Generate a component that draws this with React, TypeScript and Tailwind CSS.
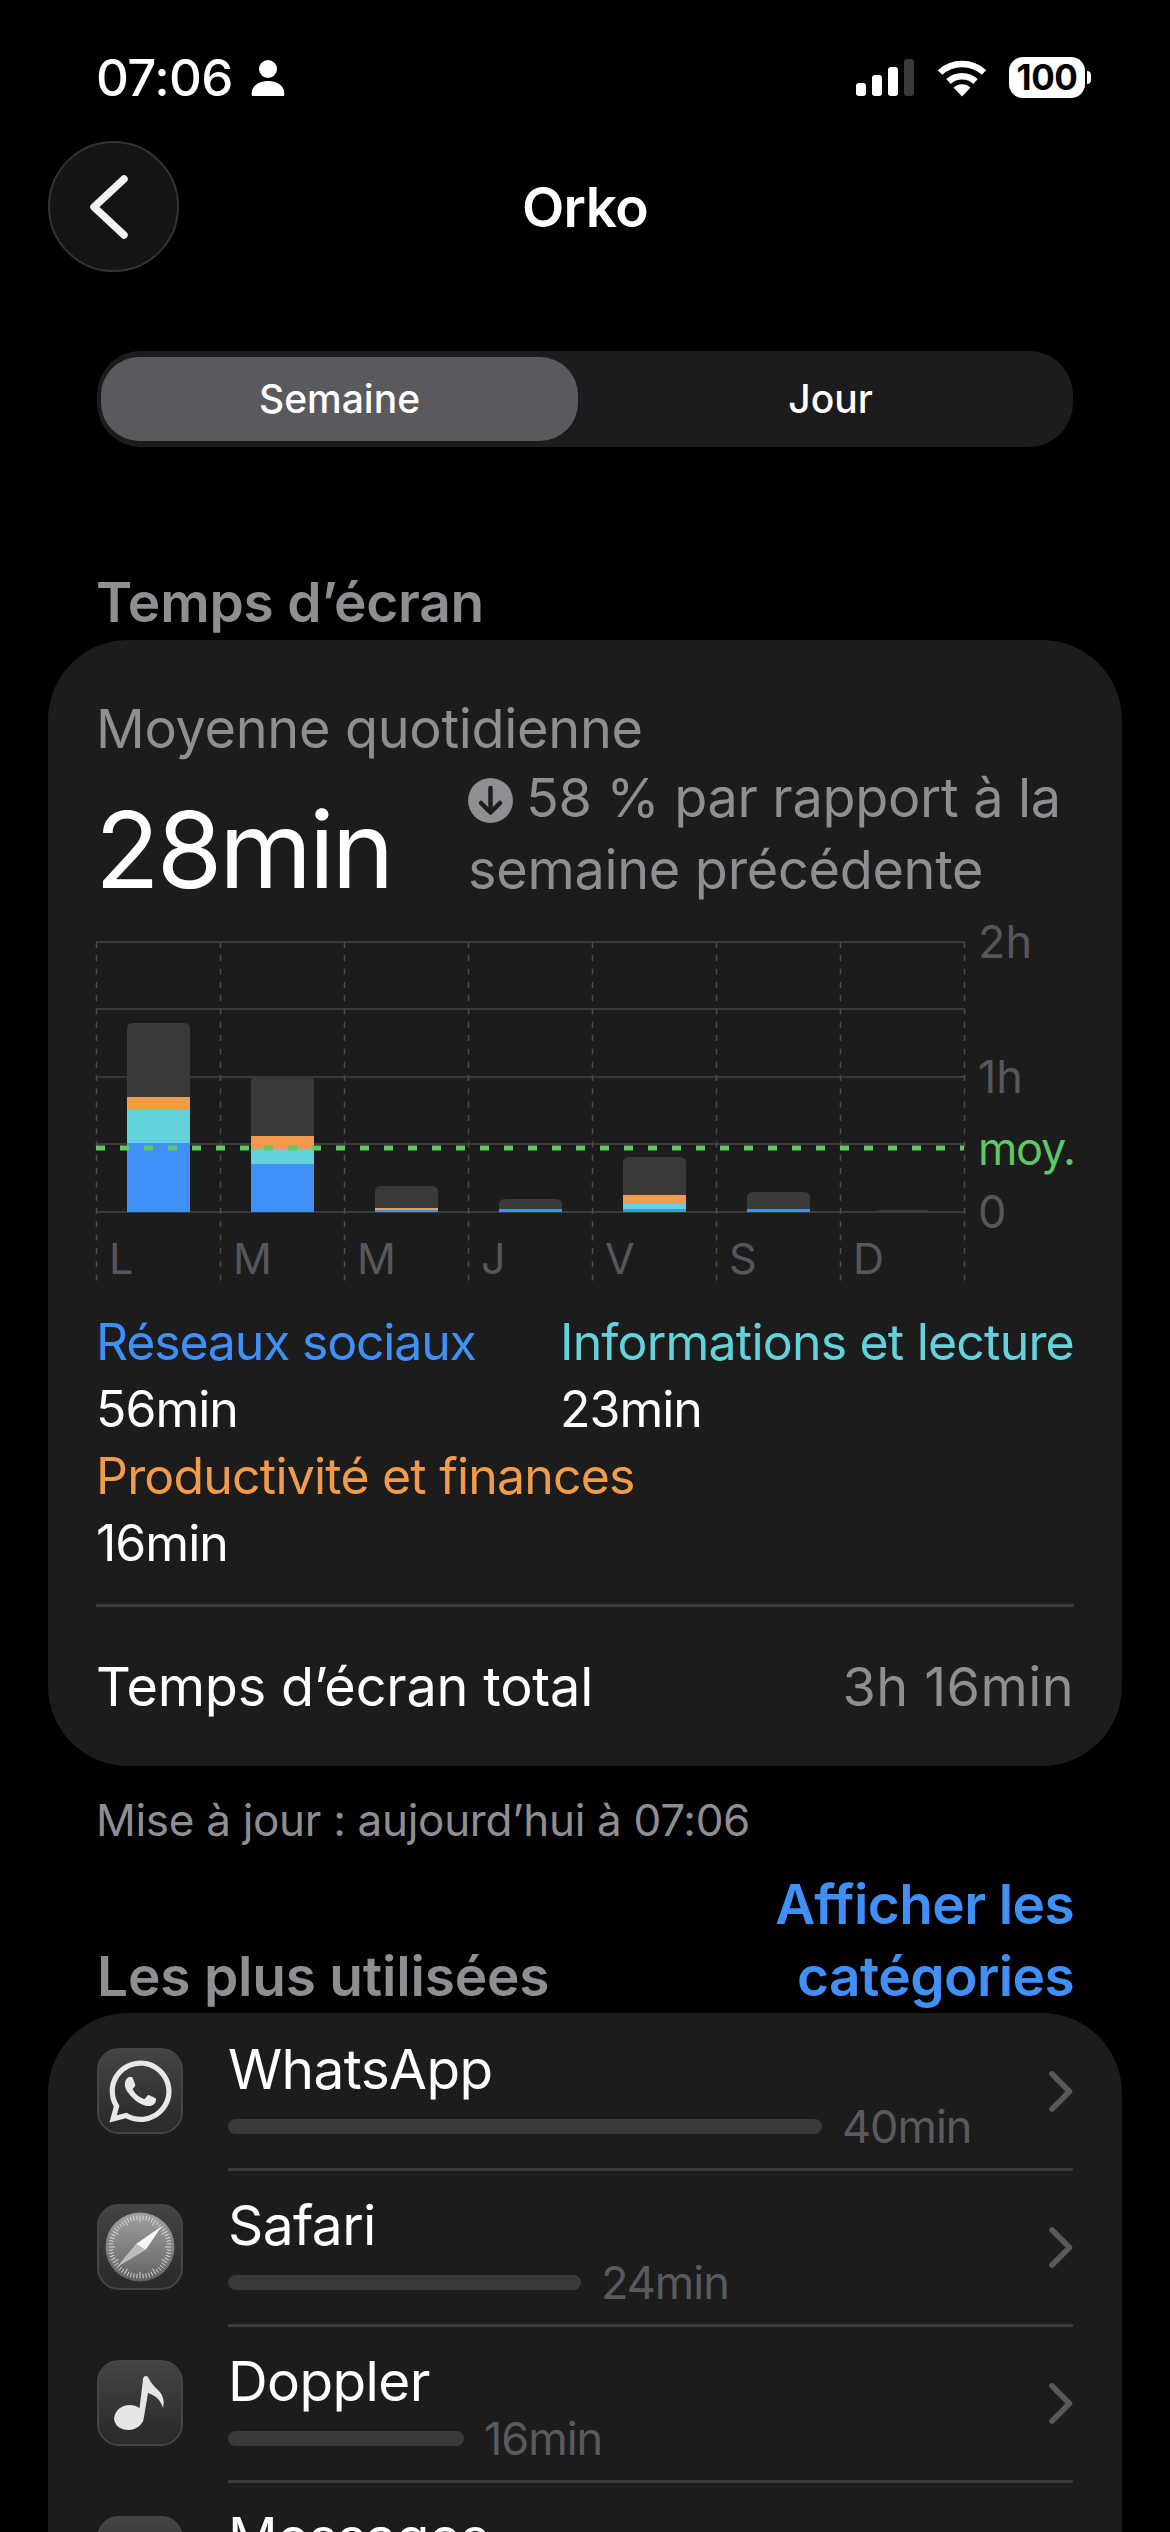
import { FaWhatsapp } from "react-icons/fa";

const days = ["L", "M", "M", "J", "V", "S", "D"];

// chart values are y positions inside the plot: [top, orange, cyan, blue], baseline at 270
const bars = [
  { x: 31, w: 63, top: 81, orange: 155, cyan: 168, blue: 201 },
  { x: 155, w: 63, top: 134, orange: 194, cyan: 207, blue: 222 },
  { x: 279, w: 63, top: 244, orange: 266, cyan: 268, blue: 268 },
  { x: 403, w: 63, top: 257, orange: 267, cyan: 267, blue: 267 },
  { x: 527, w: 63, top: 215, orange: 253, cyan: 262, blue: 267 },
  { x: 651, w: 63, top: 250, orange: 267, cyan: 267, blue: 267 },
  { x: 778, w: 58, top: 268, orange: 270, cyan: 270, blue: 270 },
];

function Wifi() {
  return (
    <svg width="50" height="38" viewBox="0 0 50 38" fill="none">
      <path d="M3 13.5C15 2 35 2 47 13.5" stroke="white" strokeWidth="6.5" />
      <path d="M11.5 22.5C19 15.5 31 15.5 38.5 22.5" stroke="white" strokeWidth="6.5" />
      <path d="M16.5 28.5L25 37.5L33.5 28.5C28.5 24 21.5 24 16.5 28.5Z" fill="white" />
    </svg>
  );
}

function Person() {
  return (
    <svg width="34" height="36" viewBox="0 0 34 36" fill="white">
      <circle cx="17" cy="9" r="9" />
      <path d="M1 36c-2-9 6-15 16-15s18 6 16 15Z" />
    </svg>
  );
}

function Chart() {
  return (
    <div className="relative h-[342px] w-[976px] shrink-0">
      <svg width="868" height="342" viewBox="0 0 868 342" fill="none" className="block overflow-visible">
        {[0, 1, 2, 3, 4, 5, 6, 7].map((i) => (
          <line key={i} x1={i * 124 + 0.5} y1="0" x2={i * 124 + 0.5} y2="342" stroke="#4c4c4e" strokeWidth="1.5" strokeDasharray="6 7.3" />
        ))}
        {[0, 67, 135, 202, 270].map((y) => (
          <line key={y} x1="0" y1={y} x2="868" y2={y} stroke="#444446" strokeWidth="1.5" />
        ))}
        {bars.map((b, i) => (
          <g key={i}>
            <path d={`M${b.x} ${b.orange}V${b.top + 6}q0 -6 6 -6H${b.x + b.w - 6}q6 0 6 6V${b.orange}Z`} fill="#3a3a3a" />
            <rect x={b.x} y={b.orange} width={b.w} height={b.cyan - b.orange} fill="#f29b4b" />
            <rect x={b.x} y={b.cyan} width={b.w} height={b.blue - b.cyan} fill="#62d2dc" />
            <rect x={b.x} y={b.blue} width={b.w} height={270 - b.blue} fill="#4090fa" />
          </g>
        ))}
        <line x1="0" y1="206" x2="868" y2="206" stroke="#5fc765" strokeWidth="5" strokeDasharray="9 15" />
      </svg>
      <div className="absolute left-0 top-[291px] grid w-[868px] grid-cols-7 text-[43px] leading-[50px] text-[#57575b]">
        {days.map((d, i) => (
          <span key={i} className="pl-[13px]">{d}</span>
        ))}
      </div>
      <span className="absolute left-[882px] top-[-25px] text-[45px] leading-[50px] text-[#57575b]">2h</span>
      <span className="absolute left-[882px] top-[110px] text-[45px] leading-[50px] text-[#57575b]">1h</span>
      <span className="absolute left-[882px] top-[182px] text-[45px] leading-[50px] tracking-[-1.3px] text-[#5fc765]">moy.</span>
      <span className="absolute left-[882px] top-[245px] text-[45px] leading-[50px] text-[#57575b]">0</span>
    </div>
  );
}

function LegendItem({ label, value, color }: { label: string; value: string; color: string }) {
  return (
    <div>
      <div className={`text-[50px] leading-[67px] whitespace-nowrap ${color}`}>{label}</div>
      <div className="text-[50px] leading-[67px] tracking-[-1px] text-white">{value}</div>
    </div>
  );
}

function AppTile({ children }: { children?: React.ReactNode }) {
  return (
    <div className="mt-[33px] flex h-[86px] w-[86px] shrink-0 items-center justify-center rounded-[22px] border-2 border-[#454547] bg-gradient-to-b from-[#444444] to-[#292929]">
      {children}
    </div>
  );
}

function SafariIcon() {
  const ticks = Array.from({ length: 60 }, (_, i) => i * 6);
  return (
    <svg width="70" height="70" viewBox="0 0 70 70">
      <defs>
        <linearGradient id="dial" x1="0" y1="0" x2="0" y2="1">
          <stop offset="0" stopColor="#a0a0a0" />
          <stop offset="1" stopColor="#626262" />
        </linearGradient>
      </defs>
      <circle cx="35" cy="35" r="34.5" fill="url(#dial)" />
      {ticks.map((a) => (
        <line key={a} x1="35" y1="3.5" x2="35" y2={a % 30 === 0 ? 10 : 8} stroke="#e8e8e8" strokeWidth="0.8" transform={`rotate(${a} 35 35)`} />
      ))}
      <polygon points="57,14 40.5,38 31,32" fill="#f6f6f6" />
      <polygon points="12,55 40.5,38 31,32" fill="#bdbdbd" />
    </svg>
  );
}

function NoteIcon() {
  return (
    <svg width="52" height="55" viewBox="0 0 52 55" fill="#e6e6e6">
      <ellipse cx="15" cy="41.5" rx="15" ry="12.5" transform="rotate(-10 15 41.5)" />
      <path d="M24.5 41L29 3c.3-2.5 3-4 5-2 3 6 6 9 10 13 4 4 7 9 5 18-2-7-6-12-15-15L30 41Z" />
    </svg>
  );
}

function RowChevron() {
  return (
    <svg width="24" height="41" viewBox="0 0 24 41" fill="none" className="shrink-0">
      <path d="M3 3l17.5 17.5L3 38" stroke="#5a5a5e" strokeWidth="5.5" strokeLinecap="round" strokeLinejoin="round" />
    </svg>
  );
}

function AppRow({ name, width, value, icon, last }: { name: string; width: string; value: string; icon?: React.ReactNode; last?: boolean }) {
  return (
    <div className="flex gap-[45px]">
      <AppTile>{icon}</AppTile>
      <div className={`flex h-[156px] flex-1 items-center border-b-[3px] ${last ? "border-transparent" : "border-[#3a3a3a]"}`}>
        <div className="flex-1 self-start pt-[19px]">
          <div className="text-[55px] leading-[70px] tracking-[-0.6px] text-white">{name}</div>
          <div className="mt-[15px] flex h-[15px] items-center gap-[20px]">
            <div className={`h-[15px] rounded-full bg-[#3a3a3c] ${width}`} />
            <span className="text-[45px] leading-[15px] tracking-[-1px] text-[#5a5a5e]">{value}</span>
          </div>
        </div>
        <RowChevron />
      </div>
    </div>
  );
}

export default function App() {
  return (
    <div className="h-[2532px] w-[1170px] overflow-hidden bg-black font-['Inter',sans-serif] text-white">
      {/* status bar */}
      <div className="flex h-[141px] items-start justify-between pl-[96px] pr-[79px] pt-[54px]">
        <div className="flex items-center gap-[18px]">
          <span className="text-[51px] font-medium leading-[48px] tracking-[-0.6px]">07:06</span>
          <Person />
        </div>
        <div className="flex items-center pt-[3px]">
          <div className="flex items-end gap-[6px]">
            <div className="h-[13px] w-[10px] rounded-[3px] bg-white" />
            <div className="h-[21px] w-[10px] rounded-[3px] bg-white" />
            <div className="h-[29px] w-[10px] rounded-[3px] bg-white" />
            <div className="h-[37px] w-[10px] rounded-[3px] bg-[#3a3a3c]" />
          </div>
          <div className="ml-[23px]"><Wifi /></div>
          <div className="ml-[22px] flex items-center gap-[2px]">
            <div className="flex h-[41px] w-[76px] items-center justify-center rounded-[14px] bg-white text-[35px] font-bold leading-none tracking-[-0.5px] text-black">100</div>
            <div className="h-[13px] w-[4px] rounded-r-full bg-white" />
          </div>
        </div>
      </div>

      {/* header */}
      <div className="relative flex h-[131px] items-center justify-center">
        <button className="absolute left-[48px] top-0 flex h-[131px] w-[131px] items-center justify-center rounded-full border-2 border-[#333335] bg-[#141414]">
          <svg width="44" height="70" viewBox="0 0 44 70" fill="none" className="-ml-[10px]">
            <path d="M37 7L7 35l30 28" stroke="#f2f2f2" strokeWidth="7.5" strokeLinecap="round" strokeLinejoin="round" />
          </svg>
        </button>
        <span className="text-[55px] font-semibold leading-[70px] tracking-[-0.6px]">Orko</span>
      </div>

      {/* segment */}
      <div className="mx-[97px] mt-[79px] flex h-[96px] items-center rounded-[44px] bg-[#1c1c1e] px-[4px]">
        <div className="flex h-[84px] w-[477px] items-center justify-center rounded-[38px] bg-[#5a5a5e] text-[39px] font-medium">Semaine</div>
        <div className="flex-1 pl-[14px] text-center text-[39px] font-medium">Jour</div>
      </div>

      <div className="mt-[119px] pl-[96px] text-[55px] font-semibold leading-[72px] tracking-[-0.2px] text-[#8e8e93]">Temps d’écran</div>

      {/* screen time card */}
      <div className="mx-[48px] mt-[2px] h-[1126px] rounded-[80px] bg-[#1c1c1c] px-[48px] pt-[53px]">
        <div className="text-[54px] leading-[72px] tracking-[-0.3px] text-[#8e8e93]">Moyenne quotidienne</div>
        <div className="-mt-[4px] flex h-[145px] items-center">
          <span className="-ml-[1px] mt-[33px] w-[373px] shrink-0 text-[106px] leading-[120px] tracking-[-3px] text-white">28min</span>
          <p className="text-[54px] leading-[72px] tracking-[-0.3px] text-[#8e8e93] whitespace-nowrap">
            <svg width="45" height="45" viewBox="0 0 45 45" className="mr-[13px] inline-block align-[-6px]">
              <circle cx="22.5" cy="22.5" r="22.5" fill="#8e8e93" />
              <path d="M22.5 10v24M13 25l9.5 9.5L32 25" stroke="#1c1c1c" strokeWidth="4.5" fill="none" strokeLinecap="round" strokeLinejoin="round" />
            </svg>
            58 % par rapport à la
            <br />
            semaine précédente
          </p>
        </div>
        <div className="mt-[36px]"><Chart /></div>
        <div className="mt-[25px] grid grid-cols-[464px_1fr]">
          <LegendItem label="Réseaux sociaux" value="56min" color="tracking-[-1.2px] text-[#4090fa]" />
          <LegendItem label="Informations et lecture" value="23min" color="tracking-[-0.8px] text-[#62d2dc]" />
          <LegendItem label="Productivité et finances" value="16min" color="tracking-[-0.8px] text-[#f29b4b]" />
        </div>
        <div className="mt-[27px] flex h-[162px] items-center justify-between border-t-[3px] border-[#3a3a3a]">
          <span className="text-[54px] tracking-[-0.2px] text-white">Temps d’écran total</span>
          <span className="text-[54px] tracking-[0.4px] text-[#8e8e93]">3h 16min</span>
        </div>
      </div>

      <div className="mt-[24px] pl-[96px] text-[44px] leading-[60px] tracking-[-0.3px] text-[#8e8e93]">Mise à jour : aujourd’hui à 07:06</div>

      <div className="mt-[18px] flex items-end justify-between pl-[97px] pr-[96px]">
        <span className="text-[55px] font-semibold leading-[72px] tracking-[-0.2px] text-[#8e8e93]">Les plus utilisées</span>
        <span className="text-right text-[55px] font-semibold leading-[72px] tracking-[-0.6px] text-[#4090fa]">
          Afficher les
          <br />
          catégories
        </span>
      </div>

      {/* most used */}
      <div className="mx-[48px] mt-[1px] rounded-t-[80px] bg-[#1c1c1c] px-[49px] pt-[2px]">
        <AppRow name="WhatsApp" width="w-[594px]" value="40min" icon={<FaWhatsapp size={71} color="#e8e8e8" />} />
        <AppRow name="Safari" width="w-[353px]" value="24min" icon={<SafariIcon />} />
        <AppRow name="Doppler" width="w-[236px]" value="16min" icon={<NoteIcon />} />
        <AppRow name="Messages" width="w-[180px]" value="9min" last />
      </div>
    </div>
  );
}
